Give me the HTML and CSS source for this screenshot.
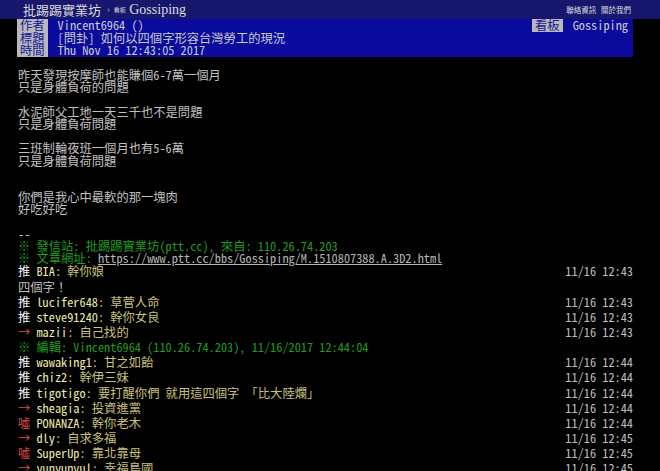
FILE: index.html
```html
<!DOCTYPE html>
<html lang="zh-Hant">
<head>
  <meta charset="UTF-8">
  <meta name="viewport" content="width=device-width, initial-scale=1.0">
  <title>[問卦] 如何以四個字形容台灣勞工的現況 - 看板 Gossiping - 批踢踢實業坊</title>
  <link rel="stylesheet" href="styles.css">
</head>
<body>
  <div id="topbar">
    <a class="logo" href="#">批踢踢實業坊</a>
    <span class="sep">›</span>
    <a class="board" href="#"><span class="board-label">看板</span> Gossiping</a>
    <div class="topbar-right">
      <a href="#">聯絡資訊</a>
      <a href="#">關於我們</a>
    </div>
  </div>

  <div id="main-content">
    <!-- 文章資訊 -->
    <div class="article-meta">
      <div class="metaline">
        <span class="meta-tag">作者</span><span class="meta-value">Vincent6964 ()</span>
        <div class="metaline-right"><span class="meta-tag">看板</span><span class="meta-value">Gossiping</span></div>
      </div>
      <div class="metaline">
        <span class="meta-tag">標題</span><span class="meta-value">[問卦] 如何以四個字形容台灣勞工的現況</span>
      </div>
      <div class="metaline">
        <span class="meta-tag">時間</span><span class="meta-value">Thu Nov 16 12:43:05 2017</span>
      </div>
    </div>

    <!-- 內文 -->
    <div class="text">
昨天發現按摩師也能賺個6-7萬一個月
只是身體負荷的問題

水泥師父工地一天三千也不是問題
只是身體負荷問題

三班制輪夜班一個月也有5-6萬
只是身體負荷問題


你們是我心中最軟的那一塊肉
好吃好吃

--
<span class="green">※ 發信站: 批踢踢實業坊(ptt.cc), 來自: 110.26.74.203</span>
<span class="green">※ 文章網址: </span><a class="link" href="#">https://www.ptt.cc/bbs/Gossiping/M.1510807388.A.3D2.html</a></div>

    <!-- 推文 -->
    <div class="push"><span class="push-tag">推 </span><span class="push-userid">BIA</span><span class="push-content">: 幹你娘</span><span class="push-time">11/16 12:43</span></div>
    <div class="push">四個字！</div>
    <div class="push"><span class="push-tag">推 </span><span class="push-userid">lucifer648</span><span class="push-content">: 草菅人命</span><span class="push-time">11/16 12:43</span></div>
    <div class="push"><span class="push-tag">推 </span><span class="push-userid">steve91240</span><span class="push-content">: 幹你女良</span><span class="push-time">11/16 12:43</span></div>
    <div class="push"><span class="push-tag red">→ </span><span class="push-userid">mazii</span><span class="push-content">: 自己找的</span><span class="push-time">11/16 12:43</span></div>
    <div class="push green">※ 編輯: Vincent6964 (110.26.74.203), 11/16/2017 12:44:04</div>
    <div class="push"><span class="push-tag">推 </span><span class="push-userid">wawaking1</span><span class="push-content">: 甘之如飴</span><span class="push-time">11/16 12:44</span></div>
    <div class="push"><span class="push-tag">推 </span><span class="push-userid">chiz2</span><span class="push-content">: 幹伊三妹</span><span class="push-time">11/16 12:44</span></div>
    <div class="push"><span class="push-tag">推 </span><span class="push-userid">tigotigo</span><span class="push-content">: 要打醒你們 就用這四個字 「比大陸爛」</span><span class="push-time">11/16 12:44</span></div>
    <div class="push"><span class="push-tag red">→ </span><span class="push-userid">sheagia</span><span class="push-content">: 投資進黨</span><span class="push-time">11/16 12:44</span></div>
    <div class="push"><span class="push-tag red">噓 </span><span class="push-userid">PONANZA</span><span class="push-content">: 幹你老木</span><span class="push-time">11/16 12:44</span></div>
    <div class="push"><span class="push-tag red">→ </span><span class="push-userid">dly</span><span class="push-content">: 自求多福</span><span class="push-time">11/16 12:45</span></div>
    <div class="push"><span class="push-tag red">噓 </span><span class="push-userid">SuperUp</span><span class="push-content">: 靠北靠母</span><span class="push-time">11/16 12:45</span></div>
    <div class="push"><span class="push-tag red">→ </span><span class="push-userid">yunyunyul</span><span class="push-content">: 幸福島國</span><span class="push-time">11/16 12:45</span></div>
  </div>
</body>
</html>
```

FILE: styles.css
```css
body {
  margin: 0;
  background-color: #000;
  color: #c0c0c0;
  font-family: "Noto Sans Mono CJK TC", "Liberation Mono", "Noto Sans CJK TC", monospace;
}
a {
  color: inherit;
  text-decoration: none;
}

/* barre du haut */
#topbar {
  display: flex;
  align-items: center;
  height: 19px;
  padding: 0 29px 0 23px;
  background-color: #17176e;
  color: #dcdcdc;
  font-family: "Noto Sans CJK TC", sans-serif;
}
.logo {
  font-size: 13px;
  line-height: 19px;
}
.sep {
  font-size: 9px;
  margin: 0 4px 0 6px;
  color: #aaa;
}
.board {
  font-family: "Liberation Serif", "Noto Sans CJK TC", serif;
  font-size: 14px;
  line-height: 19px;
}
.board-label {
  font-family: "Noto Sans CJK TC", sans-serif;
  font-size: 6px;
  vertical-align: 2px;
}
.topbar-right {
  margin-left: auto;
  font-size: 7.5px;
}
.topbar-right a + a {
  margin-left: 3px;
}

/* contenu */
#main-content {
  width: 616px;
  margin-left: 17px;
  font-size: 12.3px;
}
.article-meta {
  background-color: #0a0a9c;
}
.metaline {
  display: flex;
  height: 12.67px;
  line-height: 12.67px;
  white-space: pre;
}
.meta-tag {
  background-color: #b8b8b8;
  color: #1a1a9a;
  padding: 0 3px;
}
.meta-value {
  padding-left: 10px;
  color: #cacaca;
}
.metaline-right {
  display: flex;
  margin-left: auto;
  padding-right: 5px;
}
.text {
  white-space: pre;
  line-height: 12.2px;
  padding-left: 1px;
}
.green {
  color: #1f9d1f;
}
.link {
  color: #b4b4b4;
  text-decoration: underline;
}
.push {
  display: flex;
  height: 15.15px;
  line-height: 15.15px;
  padding-left: 1px;
  white-space: pre;
}
.push-tag {
  color: #f2f2f2;
}
.push-tag.red {
  color: #e04848;
}
.push-userid {
  color: #ecebac;
}
.push-content {
  color: #c9c07a;
}
.push-time {
  margin-left: auto;
  color: #bdbdbd;
}
```
